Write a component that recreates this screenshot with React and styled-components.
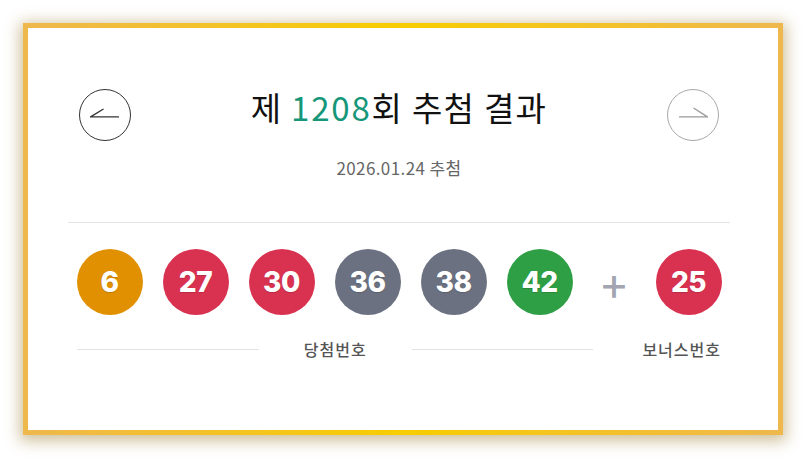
import styled, { createGlobalStyle } from 'styled-components';

const GlobalStyle = createGlobalStyle`
  body {
    margin: 0;
    padding: 23px;
    background: #ffffff;
    font-family: "Noto Sans CJK KR", "Noto Sans", sans-serif;
  }
`;

const Card = styled.section`
  box-sizing: border-box;
  width: 760px;
  height: 412px;
  padding: 57px 48px 0 40px;
  background: #ffffff;
  border: 5px solid;
  border-image: linear-gradient(90deg, #efb84d, #f8cd00 50%, #efb84d) 1;
  box-shadow: 0 3px 14px 3px rgba(150, 115, 30, 0.45);
`;

const HeaderRow = styled.div`
  display: flex;
  align-items: flex-start;
  justify-content: space-between;
  padding: 0 11px;
`;

const ArrowButton = styled.button`
  width: 52px;
  height: 52px;
  margin-top: 4px;
  padding: 0;
  border-radius: 50%;
  border: 1px solid ${p => (p.$disabled ? '#a9a9a9' : '#333333')};
  background: #ffffff;
  display: flex;
  align-items: center;
  justify-content: center;
  cursor: ${p => (p.$disabled ? 'default' : 'pointer')};
`;

const Title = styled.h2`
  margin: 0;
  font-size: 33px;
  line-height: 44px;
  font-weight: 400;
  color: #111111;
  letter-spacing: 1.3px;
`;

const Round = styled.span`
  color: #16977a;
  letter-spacing: 1.8px;
`;

const DateText = styled.p`
  margin: 17px 0 0;
  text-align: center;
  font-size: 17px;
  line-height: 20px;
  color: #666666;
  letter-spacing: 0.4px;
`;

const Divider = styled.hr`
  margin: 44px 0 0;
  border: 0;
  border-top: 1px solid #e4e4e4;
`;

const BallRow = styled.div`
  display: flex;
  justify-content: center;
  align-items: center;
  gap: 20px;
  margin-top: 26px;
`;

const Ball = styled.div`
  width: 66px;
  height: 66px;
  border-radius: 50%;
  background: ${p => p.$color};
  color: #ffffff;
  display: flex;
  align-items: center;
  justify-content: center;
  font-family: Inter, "Noto Sans", sans-serif;
  font-weight: 800;
  font-size: 28px;
  letter-spacing: -0.5px;
  text-shadow: 0 1px 1px rgba(0, 0, 0, 0.15);
`;

const Plus = styled.div`
  width: 43px;
  display: flex;
  justify-content: center;
  color: #a3a6b2;
  font-family: Inter, sans-serif;
  font-size: 46px;
  font-weight: 400;
  line-height: 1;
  padding-top: 2px;
`;

const LabelRow = styled.div`
  display: flex;
  align-items: center;
  padding: 0 9px;
  margin-top: 24px;
`;

const MainLabel = styled.div`
  flex: 1;
  display: flex;
  align-items: center;
  gap: 45px;
  font-size: 16px;
  line-height: 20px;
  font-weight: 500;
  color: #555555;
  letter-spacing: 1px;

  &::before,
  &::after {
    content: "";
    flex: 1;
    height: 1px;
    background: #e2e2e2;
  }
`;

const BonusLabel = styled.div`
  margin-left: 49px;
  font-size: 16px;
  line-height: 20px;
  font-weight: 500;
  color: #555555;
  letter-spacing: 1px;
`;

const COLORS = {
  yellow: '#e09000',
  red: '#d93251',
  gray: '#6b7180',
  green: '#2f9f45',
};

const ballColor = (n) => {
  if (n <= 10) return COLORS.yellow;
  if (n <= 30) return COLORS.red;
  if (n <= 40) return COLORS.gray;
  return COLORS.green;
};

const draw = {
  round: 1208,
  date: '2026.01.24',
  numbers: [6, 27, 30, 36, 38, 42],
  bonus: 25,
};

function PrevIcon() {
  return (
    <svg width="52" height="52" viewBox="0 0 52 52" fill="none">
      <path d="M11 28 H40 M11 28 L24 20" stroke="#333" strokeWidth="1.4" strokeLinecap="round" />
    </svg>
  );
}

function NextIcon() {
  return (
    <svg width="52" height="52" viewBox="0 0 52 52" fill="none">
      <path d="M12 28 H41 M41 28 L27 19" stroke="#9a9a9a" strokeWidth="1.4" strokeLinecap="round" />
    </svg>
  );
}

export default function App() {
  return (
    <>
      <GlobalStyle />
      <Card>
        <HeaderRow>
          <ArrowButton aria-label="이전 회차">
            <PrevIcon />
          </ArrowButton>
          <Title>
            제 <Round>{draw.round}</Round>회 추첨 결과
          </Title>
          <ArrowButton $disabled aria-label="다음 회차">
            <NextIcon />
          </ArrowButton>
        </HeaderRow>
        <DateText>{draw.date} 추첨</DateText>
        <Divider />
        <BallRow>
          {draw.numbers.map((n) => (
            <Ball key={n} $color={ballColor(n)}>{n}</Ball>
          ))}
          <Plus>+</Plus>
          <Ball $color={ballColor(draw.bonus)}>{draw.bonus}</Ball>
        </BallRow>
        <LabelRow>
          <MainLabel>당첨번호</MainLabel>
          <BonusLabel>보너스번호</BonusLabel>
        </LabelRow>
      </Card>
    </>
  );
}
